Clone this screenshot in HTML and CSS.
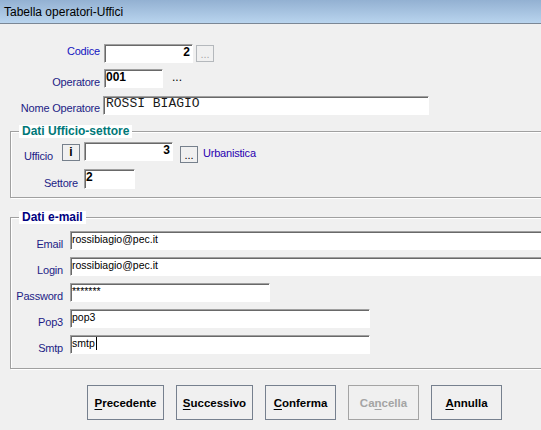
FILE: index.html
```html
<!DOCTYPE html>
<html>
<head>
<meta charset="utf-8">
<title>Tabella operatori-Uffici</title>
<link rel="stylesheet" href="styles.css">
</head>
<body>
<div class="titlebar">Tabella operatori-Uffici</div>

<div class="top">
  <div class="row r-codice">
    <span class="lbl lbl-top lbl-codice">Codice</span>
    <span class="field f-codice num">2</span>
    <span class="sbtn sbtn-off sb-codice">...</span>
  </div>
  <div class="row r-oper">
    <span class="lbl lbl-top lbl-oper">Operatore</span>
    <span class="field f-oper numl">001</span>
    <span class="dots">...</span>
  </div>
  <div class="row r-nome">
    <span class="lbl lbl-top lbl-nome">Nome Operatore</span>
    <span class="field f-nome mono">ROSSI BIAGIO</span>
  </div>
</div>

<fieldset class="group g-uff">
  <legend class="leg leg-teal">Dati Ufficio-settore</legend>
  <div class="row r-uff">
    <span class="lbl lbl-uff">Ufficio</span>
    <span class="sbtn sb-i">i</span>
    <span class="field f-uff num">3</span>
    <span class="sbtn sb-uff">...</span>
    <span class="lbl-urb">Urbanistica</span>
  </div>
  <div class="row r-sett">
    <span class="lbl lbl-sett">Settore</span>
    <span class="field f-sett numl">2</span>
  </div>
</fieldset>

<fieldset class="group g-mail">
  <legend class="leg leg-navy">Dati e-mail</legend>
  <div class="row r-mail first">
    <span class="lbl lbl-mail">Email</span>
    <span class="field txt w-long">rossibiagio@pec.it</span>
  </div>
  <div class="row r-mail">
    <span class="lbl lbl-mail">Login</span>
    <span class="field txt w-long">rossibiagio@pec.it</span>
  </div>
  <div class="row r-mail">
    <span class="lbl lbl-mail">Password</span>
    <span class="field txt w-pass">*******</span>
  </div>
  <div class="row r-mail">
    <span class="lbl lbl-mail">Pop3</span>
    <span class="field txt w-mid">pop3</span>
  </div>
  <div class="row r-mail">
    <span class="lbl lbl-mail">Smtp</span>
    <span class="field txt w-mid">smtp<span class="caret"></span></span>
  </div>
</fieldset>

<div class="buttons">
  <span class="btn w77"><u>P</u>recedente</span>
  <span class="btn w77"><u>S</u>uccessivo</span>
  <span class="btn w71"><u>C</u>onferma</span>
  <span class="btn w71 btn-off">Ca<u>n</u>cella</span>
  <span class="btn w71"><u>A</u>nnulla</span>
</div>
</body>
</html>
```

FILE: styles.css
```css
html, body {
  margin: 0;
  padding: 0;
  overflow: hidden;
  background: #f0f0f0;
  width: 541px;
  height: 430px;
  font-family: "Liberation Sans", Arial, sans-serif;
}

.titlebar {
  box-sizing: border-box;
  height: 24px;
  padding: 2px 0 0 4px;
  line-height: 21px;
  font-size: 12px;
  color: #000;
  background: linear-gradient(#93b1d2, #b9d4ee);
  border-bottom: 1px solid #7b8795;
}

.row {
  display: flex;
  align-items: flex-start;
}

.lbl {
  box-sizing: border-box;
  font-size: 11px;
  line-height: 13px;
  letter-spacing: -0.2px;
  color: #1c1c86;
  text-align: right;
  white-space: nowrap;
}

.field {
  box-sizing: border-box;
  display: block;
  height: 19px;
  background: #fff;
  border: 1px solid;
  border-color: #a0a0a0 #fff #fff #a0a0a0;
  box-shadow: inset 1px 1px 0 #696969;
  color: #000;
  white-space: nowrap;
  overflow: hidden;
}

.num {
  font-weight: bold;
  font-size: 12px;
  line-height: 14px;
  text-align: right;
  padding: 0 2px 0 0;
}

.numl {
  font-weight: bold;
  font-size: 12px;
  line-height: 14px;
  padding: 0 0 0 1px;
}

.mono {
  font-family: "Liberation Mono", "Courier New", monospace;
  font-size: 13px;
  line-height: 13px;
  padding: 0 0 0 2px;
  color: #1a1a1a;
}

.txt {
  font-size: 10.5px;
  line-height: 12px;
  padding: 1px 0 0 1px;
  color: #000;
}

/* top section */
.lbl-top { width: 104px; padding-right: 4px; }
.r-codice { margin-top: 20px; }
.lbl-codice { margin-top: 1px; color: #1414c0; }
.f-codice { width: 89px; }
.r-oper { margin-top: 6px; }
.lbl-oper { margin-top: 7px; }
.f-oper { width: 59px; }
.dots { margin: 1px 0 0 9px; font-size: 12px; line-height: 14px; color: #000; }
.r-nome { margin-top: 7px; }
.lbl-nome { margin-top: 6px; }
.f-nome { width: 326px; margin-left: -1px; }

.sbtn {
  box-sizing: border-box;
  display: block;
  width: 18px;
  height: 17px;
  border: 1px solid #76808c;
  background: #f0f0f0;
  text-align: center;
  font-size: 11px;
  line-height: 17px;
  color: #000;
}
.sbtn-off { border-color: #b4b8bc; color: #a8a8a8; }
.sb-codice { margin: 1px 0 0 3px; }

/* groups */
.group {
  box-sizing: border-box;
  width: 700px;
  margin: 0 0 0 10px;
  padding: 0;
  border: 1px solid #a0a0a0;
  box-shadow: inset 1px 1px 0 #fff, 1px 1px 0 #fff;
  min-width: 0;
}
.leg {
  margin-left: 8px;
  padding: 0 3px;
  background: #fff;
  font-weight: bold;
  font-size: 12px;
  line-height: 13px;
}
.leg-teal { color: #007878; }
.leg-navy { color: #000080; }

.g-uff { margin-top: 10px; padding-top: 4px; padding-bottom: 7px; }
.lbl-uff { margin: 8px 0 0 13px; width: 38px; text-align: left; }
.sb-i { margin-top: 2px; font-weight: bold; font-size: 12px; line-height: 15px; }
.f-uff { width: 89px; margin-left: 4px; }
.sb-uff { margin: 4px 0 0 7px; }
.lbl-urb {
  margin: 5px 0 0 5px;
  font-size: 11px;
  line-height: 13px;
  letter-spacing: -0.2px;
  color: #2a00b0;
}
.r-sett { margin-top: 6px; }
.lbl-sett { width: 73px; padding-right: 6px; margin-top: 8px; }
.f-sett { width: 51px; height: 20px; }

.g-mail { margin-top: 13px; padding-top: 7px; padding-bottom: 13px; }
.r-mail { margin-top: 6px; }
.r-mail.first { margin-top: 0; }
.lbl-mail { width: 59px; padding-right: 7px; margin-top: 7px; }
.w-long { width: 520px; }
.w-pass { width: 200px; }
.w-mid { width: 300px; }
.caret {
  display: inline-block;
  width: 1px;
  height: 13px;
  background: #000;
  vertical-align: -3px;
  margin-left: 1px;
}

/* buttons */
.buttons {
  display: flex;
  gap: 12px;
  margin: 16px 0 0 87px;
}
.btn {
  box-sizing: border-box;
  display: flex;
  align-items: center;
  justify-content: center;
  height: 35px;
  border: 1px solid #76808e;
  background: #f0f0f0;
  font-weight: bold;
  font-size: 11.5px;
  color: #000;
  white-space: nowrap;
}
.btn u { text-underline-offset: 2px; }
.w77 { width: 77px; }
.w71 { width: 71px; }
.btn-off { border-color: #a4a4a4; color: #a4a4a4; }
```
